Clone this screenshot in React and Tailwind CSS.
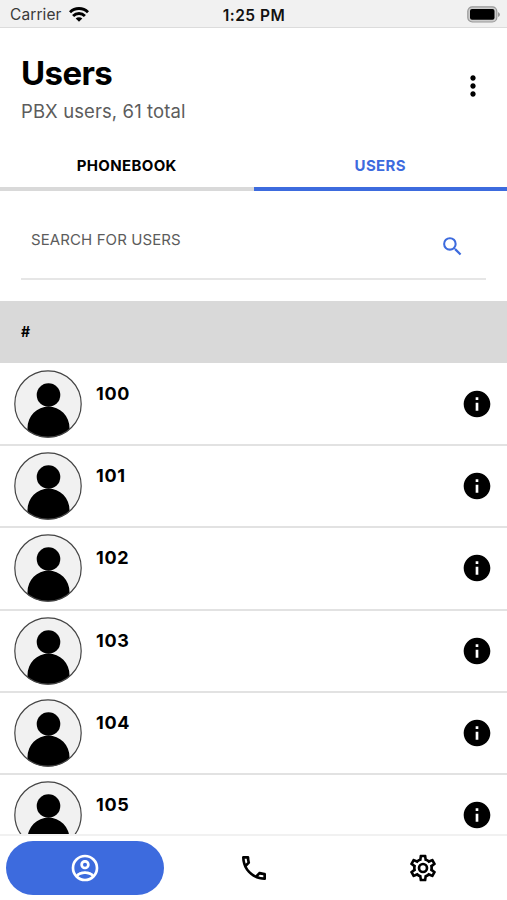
import React, { useState } from "react";

// Icons.
import { MdMoreVert, MdSearch, MdInfo } from "react-icons/md";

const users = ["100", "101", "102", "103", "104", "105"];

// Carrier, clock and battery.
function StatusBar() {
    return (
        <div className="grid h-[28px] shrink-0 grid-cols-3 items-center border-b border-[#dcdcdc] bg-[#f1f1f1] pr-[7px] pl-[10px]">
            <div className="flex items-center gap-[7px] pt-[3px]">
                <span className="text-[15.5px] leading-5 tracking-[0.1px] text-[#3a3a3a]">Carrier</span>
                <svg className="-mt-px" width="20" height="15" viewBox="0 0 20 15" fill="none" stroke="#000" strokeWidth="2.9">
                    <path d="M1 5.2a12.8 12.8 0 0 1 18 0" />
                    <path d="M4.1 9a8.3 8.3 0 0 1 11.8 0" />
                    <path d="M10 14.8 6.7 11.6a4.7 4.7 0 0 1 6.6 0z" fill="#000" stroke="none" />
                </svg>
            </div>
            <span className="-ml-[2px] pt-[4px] text-center text-[15.5px] leading-5 font-semibold tracking-[0.5px] text-[#111]">1:25 PM</span>
            <svg className="mt-px justify-self-end" width="33" height="17" viewBox="0 0 33 17">
                <rect x="0.8" y="0.8" width="29" height="15.2" rx="4.5" fill="#ccc" stroke="#999" strokeWidth="1.2" />
                <rect x="3" y="3" width="24.5" height="10.8" rx="2" fill="#000" />
                <path d="M31 6v5q2-1 2-2.5T31 6z" fill="#999" />
            </svg>
        </div>
    );
}

function Avatar() {
    return (
        <svg className="shrink-0" width="68" height="68" viewBox="0 0 68 68">
            <clipPath id="avatarClip">
                <circle cx="34" cy="34" r="33.5" />
            </clipPath>
            <circle cx="34" cy="34" r="33.2" fill="#f1f1f1" />
            <g clipPath="url(#avatarClip)">
                <circle cx="34.5" cy="25" r="11.8" />
                <path d="M13.5 68V58a21 21.500 0 0 1 42 0v10z" />
            </g>
            <circle cx="34" cy="34" r="33.2" fill="none" stroke="#444" strokeWidth="1.2" />
        </svg>
    );
}

function UserRow(props) {
    return (
        <div className="flex h-[82.2px] shrink-0 items-center border-b-2 border-[#e2e2e2] pr-[14px] pl-[14px]">
            <Avatar />
            <p className="ml-[14px] flex-1 self-start pt-[18px] text-[18px] leading-6 font-bold tracking-[0.7px]">{props.name}</p>
            <MdInfo size={32} />
        </div>
    );
}

// Bottom navigation icons.
function NavIcon(props) {
    return (
        <svg width="32" height="32" viewBox="0 0 24 24" fill="currentColor">
            <path d={props.path} />
        </svg>
    );
}

const accountPath = "M12,2A10,10 0 0,0 2,12A10,10 0 0,0 12,22A10,10 0 0,0 22,12A10,10 0 0,0 12,2M7.07,18.28C7.5,17.38 10.12,16.5 12,16.5C13.88,16.5 16.5,17.38 16.93,18.28C15.57,19.36 13.86,20 12,20C10.14,20 8.43,19.36 7.07,18.28M18.36,16.83C16.93,15.09 13.46,14.5 12,14.5C10.54,14.5 7.07,15.09 5.64,16.83C4.62,15.5 4,13.82 4,12C4,7.59 7.59,4 12,4C16.41,4 20,7.59 20,12C20,13.82 19.38,15.5 18.36,16.83M12,6C10.06,6 8.5,7.56 8.5,9.5C8.5,11.44 10.06,13 12,13C13.94,13 15.5,11.44 15.5,9.5C15.5,7.56 13.94,6 12,6M12,11A1.5,1.5 0 0,1 10.5,9.5A1.5,1.5 0 0,1 12,8A1.5,1.5 0 0,1 13.5,9.5A1.5,1.5 0 0,1 12,11Z";
const phonePath = "M20,15.5C18.8,15.5 17.5,15.3 16.4,14.9C16.3,14.9 16.2,14.9 16.1,14.9C15.8,14.9 15.6,15 15.4,15.2L13.2,17.4C10.4,15.9 8,13.6 6.6,10.8L8.8,8.6C9.1,8.3 9.2,7.9 9,7.6C8.7,6.5 8.5,5.2 8.5,4C8.5,3.5 8,3 7.5,3H4C3.5,3 3,3.5 3,4C3,13.4 10.6,21 20,21C20.5,21 21,20.5 21,20V16.5C21,16 20.5,15.5 20,15.5M5,5H6.5C6.6,5.9 6.8,6.8 7,7.6L5.8,8.8C5.4,7.6 5.1,6.3 5,5M19,19C17.7,18.9 16.4,18.6 15.2,18.2L16.4,17C17.2,17.2 18.1,17.4 19,17.4V19Z";
const cogPath = "M12,8A4,4 0 0,1 16,12A4,4 0 0,1 12,16A4,4 0 0,1 8,12A4,4 0 0,1 12,8M12,10A2,2 0 0,0 10,12A2,2 0 0,0 12,14A2,2 0 0,0 14,12A2,2 0 0,0 12,10M10,22C9.75,22 9.54,21.82 9.5,21.58L9.13,18.93C8.5,18.68 7.96,18.34 7.44,17.94L4.95,18.95C4.73,19.03 4.46,18.95 4.34,18.73L2.34,15.27C2.21,15.05 2.27,14.78 2.46,14.63L4.57,12.97L4.5,12L4.57,11L2.46,9.37C2.27,9.22 2.21,8.95 2.34,8.73L4.34,5.27C4.46,5.05 4.73,4.96 4.95,5.05L7.44,6.05C7.96,5.66 8.5,5.32 9.13,5.07L9.5,2.42C9.54,2.18 9.75,2 10,2H14C14.25,2 14.46,2.18 14.5,2.42L14.87,5.07C15.5,5.32 16.04,5.66 16.56,6.05L19.05,5.05C19.27,4.96 19.54,5.05 19.66,5.27L21.66,8.73C21.79,8.95 21.73,9.22 21.54,9.37L19.43,11L19.5,12L19.43,13L21.54,14.63C21.73,14.78 21.79,15.05 21.66,15.27L19.66,18.73C19.54,18.95 19.27,19.04 19.05,18.95L16.56,17.95C16.04,18.34 15.5,18.68 14.87,18.93L14.5,21.58C14.46,21.82 14.25,22 14,22H10M11.25,4L10.88,6.61C9.68,6.86 8.62,7.5 7.85,8.39L5.44,7.35L4.69,8.65L6.8,10.2C6.4,11.37 6.4,12.64 6.8,13.8L4.68,15.36L5.43,16.66L7.86,15.62C8.63,16.5 9.68,17.14 10.87,17.38L11.24,20H12.76L13.13,17.39C14.32,17.14 15.37,16.5 16.14,15.62L18.57,16.66L19.32,15.36L17.2,13.81C17.6,12.64 17.6,11.37 17.2,10.2L19.31,8.65L18.56,7.35L16.15,8.39C15.38,7.5 14.32,6.86 13.12,6.62L12.75,4H11.25Z";

function App() {
    const [tab, setTab] = useState("users");

    return (
        <div className="flex h-[900px] w-[507px] flex-col overflow-hidden bg-white font-['Inter',sans-serif] text-black">
            <StatusBar />

            {/* Title */}
            <div className="flex h-[114px] shrink-0 items-start justify-between pr-[18px] pl-[21px]">
                <div>
                    <h1 className="pt-[25px] text-[33px] leading-10 font-bold tracking-[-0.6px]">Users</h1>
                    <p className="mt-[6px] text-[18.5px] leading-6 tracking-[0.1px] text-[#5c5c5c]">PBX users, 61 total</p>
                </div>
                <MdMoreVert className="mt-[42px]" size={32} />
            </div>

            {/* Tabs */}
            <div className="flex h-[48.500px] shrink-0 text-[15px] font-bold tracking-[0.35px]">
                <button
                    onClick={() => setTab("phonebook")}
                    className={tab === "phonebook" ? "flex-1 border-b-4 border-[#3d6bde] pt-[3px] text-[#3d6bde]" : "flex-1 border-b-4 border-[#d9d9d9] pt-[3px]"}
                >
                    PHONEBOOK
                </button>
                <button
                    onClick={() => setTab("users")}
                    className={tab === "users" ? "flex-1 border-b-4 border-[#3d6bde] pt-[3px] text-[#3d6bde]" : "flex-1 border-b-4 border-[#d9d9d9] pt-[3px]"}
                >
                    USERS
                </button>
            </div>

            {/* Search */}
            <div className="h-[110.500px] shrink-0 px-[21px]">
                <div className="flex h-[89.500px] items-start justify-between border-b-2 border-[#e6e6e6] pr-[21px] pl-[10px]">
                    <span className="pt-[39px] text-[15px] leading-5 tracking-[0.1px] text-[#5c5c5c]">SEARCH FOR USERS</span>
                    <MdSearch className="mt-[43px] text-[#3d6bde]" size={25} />
                </div>
            </div>

            <div className="flex h-[62px] shrink-0 items-center bg-[#d9d9d9] pb-[2px] pl-[21px] text-[14px] font-bold">#</div>

            {/* Users list */}
            <div className="flex min-h-0 flex-1 flex-col overflow-hidden pt-px">
                {users.map((user) => (
                    <UserRow key={user} name={user} />
                ))}
            </div>

            {/* Bottom navigation */}
            <div className="grid h-[66px] shrink-0 grid-cols-3 border-t-2 border-[#f1f1f1] bg-white pt-[5px]">
                <button className="mr-[5px] ml-[6px] flex h-[54px] items-center justify-center rounded-full bg-[#3d6bde] text-white">
                    <NavIcon path={accountPath} />
                </button>
                <button className="flex h-[54px] items-center justify-center">
                    <NavIcon path={phonePath} />
                </button>
                <button className="flex h-[54px] items-center justify-center">
                    <NavIcon path={cogPath} />
                </button>
            </div>
        </div>
    );
}

export default App;
